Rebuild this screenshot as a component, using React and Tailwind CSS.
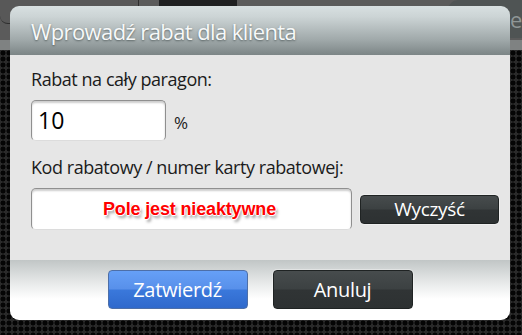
const segoe = { fontFamily: '"Open Sans", "Noto Sans", sans-serif' }

function DarkButton({ children, className = '' }) {
    return (
        <button
            className={`flex items-center justify-center rounded-[4px] border border-[#1f2323] bg-[linear-gradient(to_bottom,#474c4d_0%,#3c4142_48%,#303435_52%,#2d3132_100%)] text-white shadow-[0_0_0_1px_rgba(255,255,255,0.35)] ${className}`}
        >
            {children}
        </button>
    )
}

export default function App() {
    return (
        <div className="relative h-[335px] w-[522px] overflow-hidden bg-[#141414]" style={segoe}>
            {/* app behind the dialog */}
            <div className="flex h-[40px] items-start gap-[20px] bg-[#5b5b5b]">
                <div className="h-[24px] w-[139px] rounded-b-[8px] border-b border-r border-[#2e2e2e] bg-[#585858]" />
                <div className="h-[24px] w-[78px] rounded-b-[10px] bg-[#1f2021]" />
                <div className="ml-auto flex h-[38px] w-[74px] items-center overflow-hidden rounded-tl-[10px] bg-[#4f5454] pl-[62px] text-[22px] text-[#8f9696]">
                    ep
                </div>
            </div>
            <div className="h-[10px] bg-[#7f8282]" />
            <div className="h-[285px] bg-[#2a2a2a] bg-[radial-gradient(circle,#050505_2.2px,transparent_2.8px)] bg-[length:6px_6px]" />

            {/* dialog */}
            <div className="absolute left-[10px] top-[6px] flex h-[314px] w-[500px] flex-col overflow-hidden rounded-[9px]">
                <div className="flex h-[49px] items-center bg-[linear-gradient(to_bottom,#d8e0e1_0%,#ccd4d5_22%,#9fa8a9_70%,#7c8586_100%)] pl-[21px]">
                    <h1 className="text-[22px] leading-none tracking-[-0.6px] text-[#f7f9f9] [text-shadow:0_1px_2px_rgba(60,70,70,0.7)]">
                        Wprowadź rabat dla klienta
                    </h1>
                </div>

                <div className="flex h-[205px] flex-col bg-[#e6e6e6] pl-[21px] pr-[11px] text-[#1b1b1b]">
                    <p className="mt-[12px] text-[18px] leading-[24px] tracking-[-0.45px]">Rabat na cały paragon:</p>
                    <div className="mt-[9px] flex items-center gap-[8px]">
                        <div className="flex h-[41px] w-[135px] items-center rounded-[5px] border border-[#8f8f8f] border-b-[#dcdcdc] bg-white pl-[6px] text-[23px] text-black shadow-[inset_0_2px_2px_rgba(0,0,0,0.2)]">
                            10
                        </div>
                        <span className="mt-[4px] text-[17px]">%</span>
                    </div>
                    <p className="mt-[14px] text-[18px] leading-[24px] tracking-[-0.45px]">Kod rabatowy / numer karty rabatowej:</p>
                    <div className="mt-[9px] flex items-center gap-[8px]">
                        <div className="flex h-[42px] w-[321px] items-center justify-center rounded-[5px] border border-[#8f8f8f] border-b-[#dcdcdc] bg-white pr-[4px] shadow-[inset_0_2px_2px_rgba(0,0,0,0.2)]">
                            <span
                                className="text-[18px] font-bold tracking-[-0.15px] text-[#ff0000] [text-shadow:0_0_1px_#fff,0_0_1px_#fff,1px_0_0_#fff,-1px_0_0_#fff,0_1px_0_#fff,0_-1px_0_#fff,2px_3px_3px_rgba(0,0,0,0.4)]"
                                style={{ fontFamily: '"Liberation Sans", Arial, sans-serif' }}
                            >
                                Pole jest nieaktywne
                            </span>
                        </div>
                        <DarkButton className="h-[29px] w-[139px] text-[19px] tracking-[-0.3px]">Wyczyść</DarkButton>
                    </div>
                </div>

                <div className="flex flex-1 items-start justify-center gap-[25px] bg-[linear-gradient(to_bottom,#c1c6c6_0%,#e9ebeb_40%,#ffffff_65%)] pt-[10px]">
                    <button className="flex h-[39px] w-[140px] items-center justify-center rounded-[4px] border border-[#4d6fa8] bg-[linear-gradient(to_bottom,#66a0f7_0%,#5890ea_48%,#3a78db_52%,#2f69cc_100%)] text-[20px] tracking-[-0.3px] text-white">
                        Zatwierdź
                    </button>
                    <DarkButton className="h-[39px] w-[140px] text-[20px] tracking-[-0.3px]">Anuluj</DarkButton>
                </div>
            </div>
        </div>
    )
}
